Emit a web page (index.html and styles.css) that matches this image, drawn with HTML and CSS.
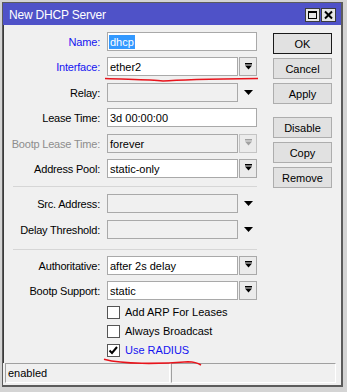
FILE: index.html
```html
<!DOCTYPE html>
<html lang="en">
<head>
    <meta charset="UTF-8">
    <meta name="viewport" content="width=device-width, initial-scale=1.0">
    <link rel="stylesheet" href="styles.css">
    <title>New DHCP Server</title>
</head>
<body>
    <div class="window">
        <div class="titlebar">
            <span class="title">New DHCP Server</span>
            <div class="tb-buttons">
                <span class="tb-btn">
                    <svg width="13" height="12" viewBox="0 0 13 12"><rect x="2.5" y="2.5" width="8" height="7" fill="none" stroke="#000" stroke-width="1"/><rect x="2" y="2" width="9" height="2" fill="#000"/></svg>
                </span>
                <span class="tb-btn">
                    <svg width="13" height="12" viewBox="0 0 13 12"><path d="M3 2.5 L10 9.5 M10 2.5 L3 9.5" stroke="#000" stroke-width="2"/></svg>
                </span>
            </div>
        </div>

        <div class="content">
            <div class="form">
                <div class="section first">
                    <div class="row">
                        <label class="lbl blue">Name:</label>
                        <div class="field"><span class="sel">dhcp</span></div>
                    </div>
                    <div class="row">
                        <label class="lbl blue">Interface:</label>
                        <div class="combo">
                            <div class="field">ether2</div>
                            <span class="dd"><svg width="7" height="7" viewBox="0 0 7 7"><rect x="0" y="0" width="7" height="1.5" fill="#000"/><polygon points="0,2.5 7,2.5 3.5,6.5" fill="#000"/></svg></span>
                        </div>
                    </div>
                    <div class="row">
                        <label class="lbl">Relay:</label>
                        <div class="combo">
                            <div class="field off"></div>
                            <span class="arrow"><svg width="9" height="5" viewBox="0 0 9 5"><polygon points="0,0 9,0 4.5,5" fill="#000"/></svg></span>
                        </div>
                    </div>
                    <div class="row">
                        <label class="lbl">Lease Time:</label>
                        <div class="field">3d 00:00:00</div>
                    </div>
                    <div class="row">
                        <label class="lbl grey">Bootp Lease Time:</label>
                        <div class="combo">
                            <div class="field off">forever</div>
                            <span class="dd off"><svg width="7" height="7" viewBox="0 0 7 7"><rect x="0" y="0" width="7" height="1.5" fill="#a0a0a0"/><polygon points="0,2.5 7,2.5 3.5,6.5" fill="#a0a0a0"/></svg></span>
                        </div>
                    </div>
                    <div class="row">
                        <label class="lbl">Address Pool:</label>
                        <div class="combo">
                            <div class="field">static-only</div>
                            <span class="dd"><svg width="7" height="7" viewBox="0 0 7 7"><rect x="0" y="0" width="7" height="1.5" fill="#000"/><polygon points="0,2.5 7,2.5 3.5,6.5" fill="#000"/></svg></span>
                        </div>
                    </div>
                </div>

                <div class="sep sep1"></div>

                <div class="section second">
                    <div class="row">
                        <label class="lbl">Src. Address:</label>
                        <div class="combo">
                            <div class="field off"></div>
                            <span class="arrow"><svg width="9" height="5" viewBox="0 0 9 5"><polygon points="0,0 9,0 4.5,5" fill="#000"/></svg></span>
                        </div>
                    </div>
                    <div class="row">
                        <label class="lbl">Delay Threshold:</label>
                        <div class="combo">
                            <div class="field off"></div>
                            <span class="arrow"><svg width="9" height="5" viewBox="0 0 9 5"><polygon points="0,0 9,0 4.5,5" fill="#000"/></svg></span>
                        </div>
                    </div>
                </div>

                <div class="sep sep2"></div>

                <div class="section third">
                    <div class="row">
                        <label class="lbl">Authoritative:</label>
                        <div class="combo">
                            <div class="field">after 2s delay</div>
                            <span class="dd"><svg width="7" height="7" viewBox="0 0 7 7"><rect x="0" y="0" width="7" height="1.5" fill="#000"/><polygon points="0,2.5 7,2.5 3.5,6.5" fill="#000"/></svg></span>
                        </div>
                    </div>
                    <div class="row">
                        <label class="lbl">Bootp Support:</label>
                        <div class="combo">
                            <div class="field">static</div>
                            <span class="dd"><svg width="7" height="7" viewBox="0 0 7 7"><rect x="0" y="0" width="7" height="1.5" fill="#000"/><polygon points="0,2.5 7,2.5 3.5,6.5" fill="#000"/></svg></span>
                        </div>
                    </div>
                    <div class="check-row">
                        <span class="box"></span>
                        <span>Add ARP For Leases</span>
                    </div>
                    <div class="check-row">
                        <span class="box"></span>
                        <span>Always Broadcast</span>
                    </div>
                    <div class="check-row">
                        <span class="box"><svg width="11" height="11" viewBox="0 0 11 11"><path d="M1.5 5.5 L4 8 L9 2" fill="none" stroke="#000" stroke-width="2"/></svg></span>
                        <span class="blue">Use RADIUS</span>
                    </div>
                </div>
            </div>

            <div class="buttons">
                <button class="default">OK</button>
                <button>Cancel</button>
                <button>Apply</button>
                <button class="spaced">Disable</button>
                <button>Copy</button>
                <button>Remove</button>
            </div>
        </div>

        <div class="status">
            <div class="cell">enabled</div>
            <div class="cell"></div>
        </div>
    </div>

    <!-- red pen marks drawn over the dialog -->
    <svg class="marks" width="347" height="392" viewBox="0 0 347 392">
        <path d="M105 78.5 C130 79.5 150 79.5 163 81 C176 80 220 79 258 78.5" fill="none" stroke="#e8141c" stroke-width="1.6"/>
        <path d="M104 359.3 Q118 363 142 363.3 T188 361.8 Q196 362 201 365" fill="none" stroke="#e8141c" stroke-width="1.6"/>
    </svg>
</body>
</html>
```

FILE: styles.css
```css
body {
    margin: 0;
    padding: 2px 0 0 2px;
    background-color: #d4d4d4;
    font-family: "Liberation Sans", Arial, sans-serif;
    font-size: 11px;
    color: #000;
    position: relative;
    height: 392px;
    box-sizing: border-box;
    overflow: hidden;
}

.window {
    width: 341px;
    height: 385px;
    box-sizing: border-box;
    border: 1px solid #5c5c5c;
    border-right-width: 2px;
    border-bottom-width: 2px;
    background-color: #f0f0f0;
    display: flex;
    flex-direction: column;
}

.titlebar {
    height: 22px;
    background-color: #4f52c8;
    color: #fff;
    display: flex;
    flex-shrink: 0;
}

.title {
    padding: 5px 0 0 6px;
    line-height: 15px;
    font-size: 12px;
    letter-spacing: -0.2px;
}

.tb-buttons {
    margin-left: auto;
    margin-right: 5px;
    padding-top: 5px;
    display: flex;
    gap: 1px;
}

.tb-btn {
    width: 15px;
    height: 14px;
    box-sizing: border-box;
    border: 1px solid #3c3c3c;
    background-color: #e6e6e6;
    display: flex;
}

.content {
    flex: 1;
    display: flex;
    border-left: 1px solid #3a3a3a;
    padding: 7px 9px 0 0;
}

.form {
    width: 253px;
}

.section {
    display: flex;
    flex-direction: column;
}

.section.first {
    gap: 6.4px;
}

.section.second {
    gap: 7px;
}

.section.third {
    gap: 6px;
}

.row {
    display: grid;
    grid-template-columns: 96px 150px;
    column-gap: 7px;
    height: 19px;
}

.lbl {
    text-align: right;
    white-space: nowrap;
    line-height: 17px;
    padding-top: 2px;
    letter-spacing: -0.2px;
}

.blue {
    color: #1414f0;
}

.grey {
    color: #8d8d8d;
}

.field {
    height: 19px;
    box-sizing: border-box;
    border: 1px solid #a9a9a9;
    background-color: #fff;
    padding: 2px 0 0 2px;
    line-height: 15px;
    white-space: nowrap;
    flex: 1;
}

.field.off {
    background-color: #f0f0f0;
}

.sel {
    display: inline-block;
    background-color: #3399ff;
    color: #fff;
    line-height: 14px;
    margin-left: -1px;
    padding: 0 1px;
}

.combo {
    display: flex;
    gap: 1px;
}

.combo .field {
    flex: none;
    width: 131px;
}

.dd {
    width: 18px;
    height: 19px;
    box-sizing: border-box;
    border: 1px solid #a9a9a9;
    background-color: #ebebeb;
    display: flex;
    align-items: center;
    justify-content: center;
}

.dd svg {
    margin-top: -1px;
}

.dd.off {
    border-color: #c4c4c4;
}

.arrow {
    width: 18px;
    display: flex;
    align-items: center;
    justify-content: center;
}

.arrow svg {
    margin-top: 1px;
}

.sep {
    border-top: 1px solid #d6d6d6;
    margin-left: 9px;
}

.sep1 {
    margin-top: 8px;
    margin-bottom: 7px;
}

.sep2 {
    margin-top: 10px;
    margin-bottom: 6px;
}

.check-row {
    display: flex;
    align-items: center;
    gap: 5px;
    height: 13px;
    line-height: 13px;
    margin-left: 103px;
    white-space: nowrap;
}

.box {
    width: 13px;
    height: 13px;
    box-sizing: border-box;
    border: 1px solid #555;
    background-color: #fff;
    display: flex;
    align-items: center;
    justify-content: center;
}

.buttons {
    margin-left: 16px;
    width: 59px;
    padding-top: 1px;
    display: flex;
    flex-direction: column;
    gap: 4px;
}

button {
    height: 21px;
    padding: 0;
    border: 1px solid #adadad;
    background-color: #e1e1e1;
    font-family: inherit;
    font-size: 11px;
    color: #000;
}

button.default {
    border-color: #1a1a1a;
}

button.spaced {
    margin-top: 9px;
}

.status {
    display: flex;
    gap: 1px;
    height: 20px;
    margin: 0 5px 2px 2px;
    flex-shrink: 0;
}

.cell {
    flex: 1;
    box-sizing: border-box;
    border: 1px solid;
    border-color: #a0a0a0 #fff #fff #a0a0a0;
    padding-left: 2px;
    line-height: 18px;
}

.marks {
    position: absolute;
    top: 0;
    left: 0;
    pointer-events: none;
}
```
